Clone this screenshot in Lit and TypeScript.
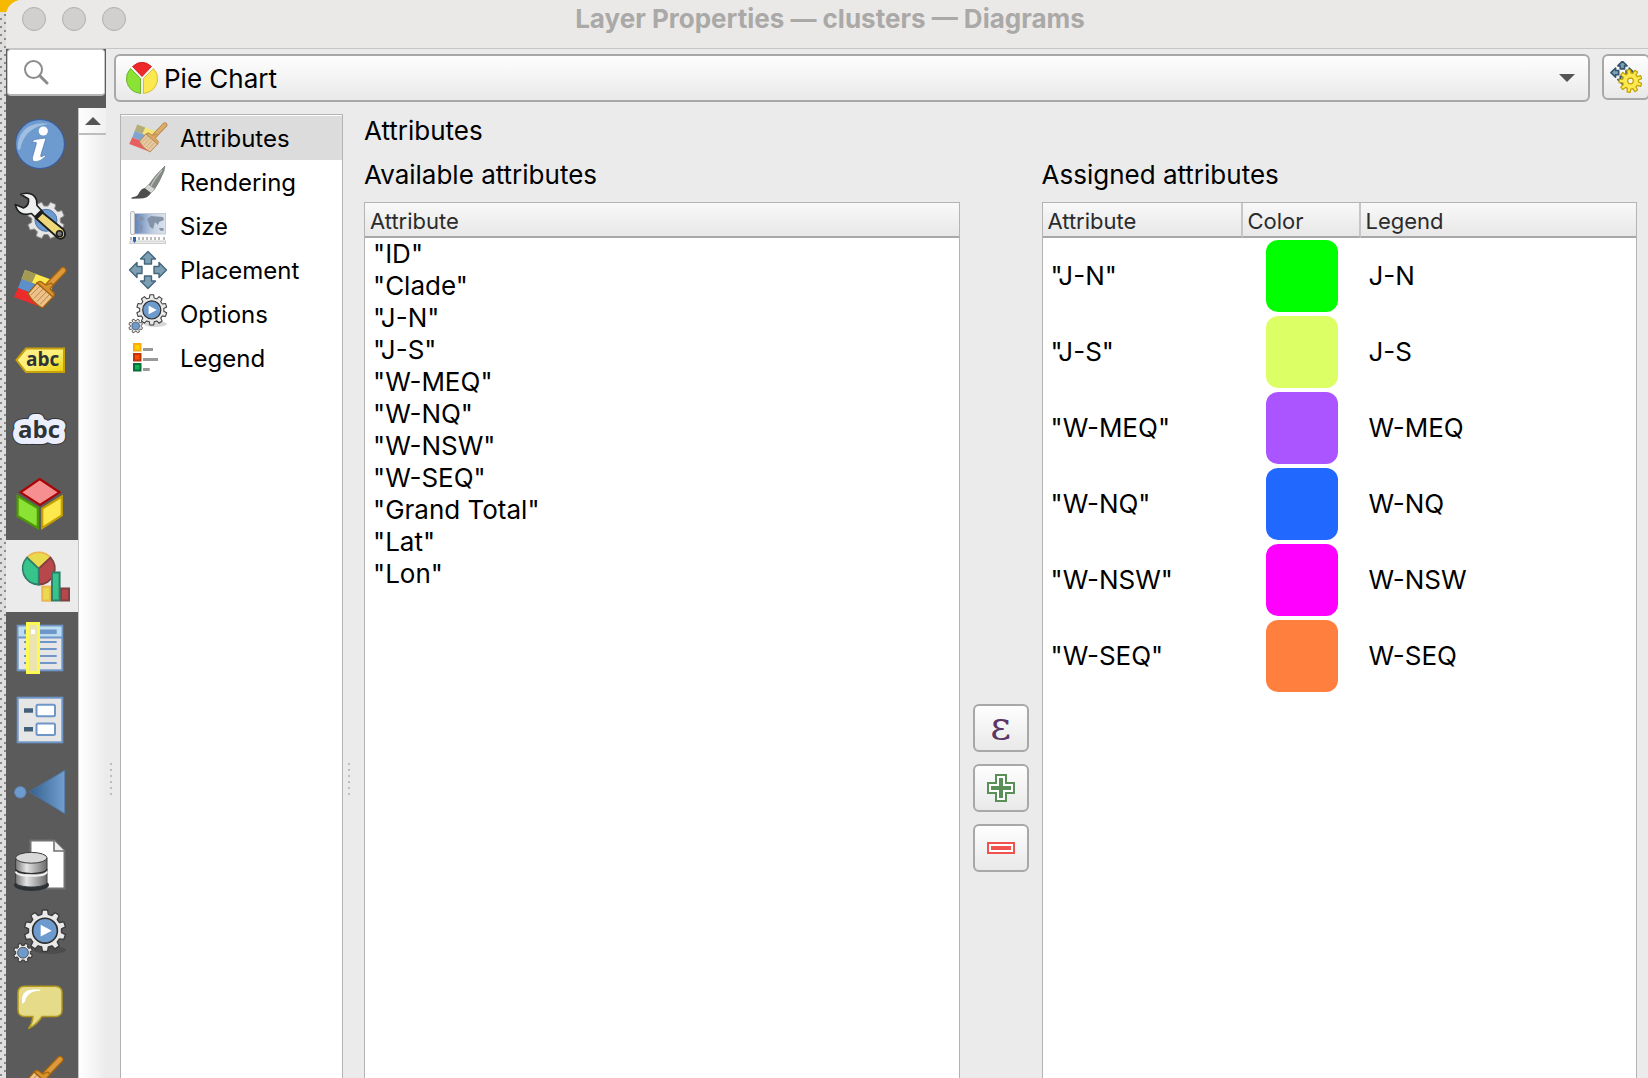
import { LitElement, html, css, svg, nothing } from "lit";
import { customElement, state } from "lit/decorators.js";
import { classMap } from "lit/directives/class-map.js";
import { styleMap } from "lit/directives/style-map.js";

/** Outline of a cog wheel with flat teeth. */
function gearPath(cx: number, cy: number, outer: number, inner: number, teeth: number): string {
  const step = (Math.PI * 2) / teeth;
  const pts: string[] = [];
  for (let i = 0; i < teeth; i++) {
    const a = i * step + step / 2;
    const corners: [number, number][] = [
      [-0.32, inner],
      [-0.2, outer],
      [0.2, outer],
      [0.32, inner],
    ];
    for (const [f, r] of corners) {
      pts.push(`${(cx + r * Math.cos(a + f * step)).toFixed(2)} ${(cy + r * Math.sin(a + f * step)).toFixed(2)}`);
    }
  }
  return `M${pts.join("L")}Z`;
}

const brushTool = svg`
  <path d="M57 18.500L43 33" stroke="#a8660d" stroke-width="7" stroke-linecap="round"/>
  <path d="M57 18.500L43 33" stroke="#dd9a3c" stroke-width="4.600" stroke-linecap="round"/>
  <path d="M31 31Q34 28 37 31L40 33L45 31L47 33L44 37L48 41Q49 44 46 46Z" fill="#d8922f" stroke="#a8660d" stroke-width="1.200"/>
  <path d="M31 31L22 41.500Q27 51 36.500 56L47 45Z" fill="#edc187" stroke="#9c600f" stroke-width="1.300"/>
  <path d="M25 43L34 34M28 46.500L37 37M31 49.500L40 40M34 52.500L43 43" stroke="#b98a4d" stroke-width="1"/>`;

const symbologyArt = svg`
  <path d="M19 18L49 29L45 38L15.500 27Z" fill="#fde94c"/>
  <path d="M19 18L30 22L26 31L15.500 27Z" fill="#a39a55"/>
  <path d="M15.500 27L45 38L41 47L12 36Z" fill="#5d8fcb"/>
  <path d="M12 36L41 47L37 56L8 45Z" fill="#ee2b2b"/>
  ${brushTool}`;

const actionsArt = svg`
  <ellipse cx="44" cy="50" rx="16" ry="4" fill="#000" opacity=".16"/>
  <path d=${gearPath(39, 30.7, 20.8, 16.6, 10)} fill="#e9e9e9" stroke="#3c3c3c" stroke-width="1.400" stroke-linejoin="round"/>
  <circle cx="39" cy="30.700" r="12.400" fill="#6e9bcd" stroke="#2d2d2d" stroke-width="1.600"/>
  <path d="M34.700 24.800V36.600L45.700 30.700Z" fill="#fff"/>
  <path d=${gearPath(17, 52.7, 9.6, 7.4, 8)} fill="#e9e9e9" stroke="#3c3c3c" stroke-width="1.100" stroke-linejoin="round"/>
  <circle cx="17" cy="52.700" r="5.400" fill="#6e9bcd" stroke="#555" stroke-width="1"/>`;

const arrowsArt = (stroke: string, width: number) =>
  [0, 90, 180, 270].map(
    (deg) => svg`<path transform="rotate(${deg} 20 22)" d="M20 3.500L27.500 11H23.500V16H16.500V11H12.500Z" fill="#7d9fb4" stroke=${stroke} stroke-width=${width} stroke-linejoin="round"/>`,
  );

const layerIcons: Record<string, unknown> = {
  Information: svg`
    <circle cx="34" cy="36" r="24.500" fill="#6d9bd0" stroke="#3a5c9e" stroke-width="1.200"/>
    <path d="M12 42C10 24 24 12 44 16C28 17 17 26 14.500 41Z" fill="#fff" opacity=".35"/>
    <circle cx="37.300" cy="23" r="4.600" fill="#fff"/>
    <path d="M26 34.500Q27 31.500 30 31.300L40 30L34.800 47Q34.300 49.600 36.200 48.600L38.500 46.800L39.400 48.400Q34 54 29.300 53.800Q25.400 53.200 26.600 48.800L30.300 36Q30.800 33.800 29 34.200Z" fill="#fff" stroke="#3f66a4" stroke-width=".600"/>`,
  Source: svg`
    <path d=${gearPath(40, 40.3, 18.6, 14.4, 8)} fill="#e6e6e6" stroke="#8d8d8d" stroke-width="1"/>
    <circle cx="40" cy="40.300" r="11" fill="#6e9bcd" stroke="#4b77ab" stroke-width="1"/>
    <path d="M14.700 14.300Q27 10.500 30.500 20L31 25.500L37 32L30 38L25.500 33.500Q12 37 9.300 24.500L17.500 28Q23.500 25.500 22.500 19Z" fill="#eef0ef" stroke="#1e1e1e" stroke-width="1.600" stroke-linejoin="round"/>
    <path d="M35.700 32L57 49Q60 53 58.500 56.500Q56 60 52 58L29.500 38Z" fill="#eed879" stroke="#1e1e1e" stroke-width="1.800" stroke-linejoin="round"/>
    <path d="M36 31.500L29.500 38" stroke="#1e1e1e" stroke-width="4"/>
    <circle cx="53.500" cy="53.700" r="3" fill="#777" stroke="#1e1e1e" stroke-width="1.600"/>`,
  Symbology: symbologyArt,
  Labels: svg`
    <defs><linearGradient id="tag" x1="0" y1="0" x2="1" y2="1"><stop offset="0" stop-color="#fff08a"/><stop offset=".5" stop-color="#fdf07a"/><stop offset="1" stop-color="#ecd000"/></linearGradient></defs>
    <path d="M10.500 36L20 24.500H58V48H20Z" fill="url(#tag)" stroke="#c8a20c" stroke-width="2"/>
    <text class="abc" x="20" y="42" font-size="19">abc</text>`,
  Masks: svg`
    <text class="abc" x="12" y="42" font-size="24" stroke="#33373c" stroke-width="14" stroke-linejoin="round">abc</text>
    <text class="abc" x="12" y="42" font-size="24" stroke="#ebeffd" stroke-width="12" stroke-linejoin="round">abc</text>
    <text class="abc" x="12" y="42" font-size="24">abc</text>`,
  "3D View": svg`
    <path d="M33.700 11L53.500 24.300L34 37L14.500 24.300Z" fill="#f68f8f" stroke="#a90505" stroke-width="2.200"/>
    <path d="M11.600 28L31.800 40V60L11.600 48Z" fill="#8ae234" stroke="#4e9a06" stroke-width="2.200"/>
    <path d="M55.800 28.500L36.200 40.500V60L55.800 47.500Z" fill="#fde94c" stroke="#c4a000" stroke-width="2.200"/>`,
  Diagrams: svg`
    <path d="M32.700 28.700L21 17.500A16 16 0 0 1 44.500 17.500Z" fill="#e9db4d" stroke="#ecb650" stroke-width="1.800"/>
    <path d="M32.700 28.700L44.500 17.500A16 16 0 0 1 32.700 44.500Z" fill="#b7474b" stroke="#7f3f43" stroke-width="1.800"/>
    <path d="M32.700 28.700L21 17.500A16 16 0 0 0 32.700 44.500Z" fill="#36c48a" stroke="#2d7f6c" stroke-width="1.800"/>
    <rect x="36.300" y="46.700" width="8" height="14" fill="#e9db4d" stroke="#ecb650" stroke-width="2"/>
    <rect x="55" y="48.500" width="8" height="12" fill="#b7474b" stroke="#7f3f43" stroke-width="2"/>
    <rect x="46" y="32.500" width="7.600" height="28" fill="#36c48a" stroke="#2d7f6c" stroke-width="2"/>`,
  Fields: svg`
    <rect x="11.700" y="13.700" width="44.600" height="44.600" fill="#e6e6e6" stroke="#6e96c8" stroke-width="2"/>
    <path d="M12.700 14.700H55.300V25H12.700Z" fill="#bcdcf0"/>
    <path d="M12 25.500H56" stroke="#6e96c8" stroke-width="2"/>
    <path d="M18 17.500H50.700V22H18Z" fill="#6e96c8"/>
    <path d="M18 30H50.700M18 37H50.700M18 44H50.700M18 51H50.700" stroke="#6e96c8" stroke-width="2"/>
    <rect x="21.500" y="11.500" width="11" height="49" fill="#ebe3b0" stroke="#fdf951" stroke-width="3"/>
    <rect x="25" y="17.500" width="4" height="4.500" fill="#fff"/>`,
  "Attributes Form": svg`
    <rect x="11.700" y="13.700" width="44.600" height="44.600" fill="#e6e6e6" stroke="#6e96c8" stroke-width="2"/>
    <path d="M18 24.300H27V28.700H18ZM18 43H27V47.400H18Z" fill="#44617c"/>
    <rect x="30.500" y="20.800" width="18.500" height="11.500" rx="1.500" fill="#fcfeff" stroke="#6e96c8" stroke-width="2"/>
    <rect x="30.500" y="39.500" width="18.500" height="11.500" rx="1.500" fill="#fcfeff" stroke="#6e96c8" stroke-width="2"/>`,
  Joins: svg`
    <defs><linearGradient id="join"><stop offset="0" stop-color="#34608f"/><stop offset="1" stop-color="#729fcf"/></linearGradient></defs>
    <circle cx="14.300" cy="36.300" r="5.800" fill="#6e9bcd" stroke="#5580b3" stroke-width=".800"/>
    <path d="M23.300 35.800L58.800 14.200V57.800Z" fill="url(#join)" stroke="#4873a6" stroke-width=".800"/>`,
  "Auxiliary Storage": svg`
    <defs><linearGradient id="disk"><stop offset="0" stop-color="#777"/><stop offset=".35" stop-color="#e4e4e4"/><stop offset="1" stop-color="#6b6b6b"/></linearGradient></defs>
    <path d="M24.500 12.500H48L58.500 23V60.500H24.500Z" fill="#fff" stroke="#727272" stroke-width="2"/>
    <path d="M48 12.500V23H58.500" fill="#eee" stroke="#727272" stroke-width="1.600"/>
    <ellipse cx="25.500" cy="57" rx="17.500" ry="6" fill="#2c3236"/>
    <path d="M9.600 30V54.500C11 60.500 40 60.500 41 54.500V30Z" fill="url(#disk)" stroke="#3c3c3c" stroke-width="1"/>
    <path d="M9.600 41C11 47 40 47 41 41" fill="none" stroke="#2f2f2f" stroke-width="1.200"/>
    <path d="M9.600 43.500C11 49.500 40 49.500 41 43.500" fill="none" stroke="#f2f2f2" stroke-width="1.600"/>
    <ellipse cx="25.300" cy="29.800" rx="15.700" ry="5.400" fill="#d9d9d9" stroke="#3c3c3c" stroke-width="1"/>`,
  Actions: actionsArt,
  Display: svg`
    <path d="M19 14.200H49Q56 14.200 56 21V38Q56 44.500 49 44.500H36Q30.500 53 22.700 56.400Q26.500 51 27 44.500H19Q12 44.500 12 38V21Q12 14.200 19 14.200Z" fill="#e5db88" stroke="#b39a1e" stroke-width="1.500" stroke-linejoin="round"/>
    <path d="M16 32V26Q17 17.500 27 17.500H34.500L34 18.800Q21 19 18.700 30Z" fill="#fff"/>`,
  Rendering: svg`<g transform="translate(-3 -3)">${brushTool}</g>`,
};

const sectionIcons: Record<string, unknown> = {
  Attributes: svg`<g opacity=".7" transform="translate(-4.500 -4.500) scale(.724)">${symbologyArt}</g>`,
  Rendering: svg`
    <path d="M37 6L36 11Q31 23 26 30L20 26Q27 15 37 6Z" fill="#858a85" stroke="#6b706b" stroke-width=".600"/>
    <path d="M34 10Q27 18 22.500 26.500" stroke="#bfc3bf" stroke-width="1.200" fill="none"/>
    <path d="M20.500 24.500L27 29L23 33L16.500 28.500Z" fill="#d4d6d4" stroke="#8d918d" stroke-width=".600"/>
    <path d="M16.500 28L23 33Q20 38.500 12 38.500L3.300 38.700Q3 37 6.500 36.700Q10 36 11.500 32Q13.500 28.500 16.500 28Z" fill="#4b4e4b"/>`,
  Size: svg`
    <defs><linearGradient id="map"><stop offset="0" stop-color="#5b7fb9"/><stop offset=".6" stop-color="#c3cfe2"/><stop offset="1" stop-color="#dde3ec"/></linearGradient></defs>
    <rect x="6" y="9.500" width="31.500" height="20.500" fill="url(#map)" stroke="#c5cad2" stroke-width="1"/>
    <path d="M8.500 14L14 12L16 15L12.500 18L9.500 17ZM11.500 19.500L15 22L13.500 27.500H12ZM19 15L23 12L35 13L36 16L31 18L30 21L27 18L25 25L22 23L20.500 19ZM31 24L35.500 24V27L32 26.500Z" fill="#8593a9"/>
    <rect x="2.500" y="7.500" width="4" height="23" rx="1.500" fill="#f2f2f2" stroke="#b9bcc0" stroke-width="1"/>
    <path d="M3 33V36M7 33V36M11 33V36M15 33V36M19 33V36M23 33V36M27 33V36M31 33V36M36 33V36" stroke="#777" stroke-width="1"/>
    <rect x="2" y="37" width="35.500" height="2.600" fill="#ececec" stroke="#c2c2c2" stroke-width=".800"/>
    <path d="M5 33H8V37L6.500 39L5 37Z" fill="#2d62a8"/>`,
  Placement: arrowsArt("#44667c", 1.4),
  Options: svg`<g transform="translate(-4.700 -4.500) scale(.73)">${actionsArt}</g>`,
  Legend: svg`
    <rect x="6" y="8" width="6.500" height="6.500" fill="#fdd400" stroke="#fba90b" stroke-width="2"/>
    <rect x="6" y="18" width="6.500" height="6.500" fill="#fb4b0a" stroke="#bd3405" stroke-width="2"/>
    <rect x="6" y="28" width="6.500" height="6.500" fill="#0eb358" stroke="#0a6e3b" stroke-width="2"/>
    <path d="M15 13.500H25M15 23.500H30M15 33.500H21.700" stroke="#999" stroke-width="3"/>`,
};

const layerPages = Object.keys(layerIcons);
const sections = Object.keys(sectionIcons);
const available = ["ID", "Clade", "J-N", "J-S", "W-MEQ", "W-NQ", "W-NSW", "W-SEQ", "Grand Total", "Lat", "Lon"];
const assigned = [
  { name: "J-N", color: "#00ff00" },
  { name: "J-S", color: "#dcff66" },
  { name: "W-MEQ", color: "#aa55ff" },
  { name: "W-NQ", color: "#2168ff" },
  { name: "W-NSW", color: "#ff00ff" },
  { name: "W-SEQ", color: "#ff7f3f" },
];

@customElement("app-root")
export class AppRoot extends LitElement {
  @state() private page = "Diagrams";
  @state() private section = "Attributes";

  static styles = css`
    :host {
      display: block;
      height: 100vh;
      overflow: hidden;
      font: 26px/32px Inter, "Liberation Sans", sans-serif;
      color: #000;
    }
    * { box-sizing: border-box; }
    button, input, select { font: inherit; color: inherit; margin: 0; padding: 0; border: 0; background: none; outline: none; }
    svg { display: block; flex: none; }
    .abc { font-family: "Open Sans", sans-serif; font-weight: 700; fill: #2e3436; }

    .desktop {
      display: flex;
      height: 100%;
      background:
        linear-gradient(#f7b800, #f7b800) 0 0 / 30px 12px no-repeat,
        conic-gradient(from 270deg at 2px 2px, #8a8a8a 90deg, transparent 0) 4px 14px / 8px 8px,
        conic-gradient(from 270deg at 2px 2px, #8a8a8a 90deg, transparent 0) 0 18px / 8px 8px,
        #dedede;
    }
    .window { flex: 1; min-width: 0; margin-left: 6px; display: flex; flex-direction: column; background: #ebebeb; border-top-left-radius: 16px; overflow: hidden; }

    .titlebar { flex: none; display: grid; grid-template-columns: 1fr auto 1fr; align-items: center; height: 49px; padding: 0 10px 10px 16px; background: #eae9e7; border-bottom: 1px solid #c6c6c6; }
    .lights { display: flex; gap: 16px; }
    .light { width: 24px; height: 24px; border-radius: 50%; background: #d1d0cf; border: 1px solid #b0afae; }
    .title { margin: 0; font-size: 26px; font-weight: 700; color: #aaa9a8; white-space: nowrap; }

    .content { flex: 1; min-height: 0; display: flex; }
    .side { flex: none; width: 100px; display: flex; flex-direction: column; background: #5b5b5b; }
    .search { flex: none; display: flex; align-items: center; height: 47px; margin: 0 1px 12px; padding-left: 15px; gap: 8px; background: #fff; border: 1px solid #c9c9c9; border-bottom: 2px solid #b5b5b5; border-radius: 4px; }
    .search input { flex: 1; min-width: 0; width: 0; font-size: 22px; }
    .side-scroll { flex: 1; min-height: 0; display: flex; }
    .pages { flex: none; width: 72px; overflow: hidden; }
    .page { display: block; width: 72px; height: 72px; }
    .page.current { background: #ebebeb; }
    .scrollbar { flex: 1; border-left: 1px solid #c4c4c4; background: linear-gradient(90deg, #fff, #ebebeb); }
    .scroll-up { display: flex; width: 100%; height: 27px; align-items: center; justify-content: center; border-bottom: 2px solid #bdbdbd; background: linear-gradient(90deg, #fdfdfd, #f0f0f0); }

    .splitter { flex: none; padding-top: 714px; display: flex; justify-content: center; }
    .splitter.outer { width: 10px; margin-right: -2px; }
    .splitter.inner { width: 21px; padding: 649px 10px 0 0; }
    .grip { width: 2px; height: 36px; background: repeating-linear-gradient(#bdbdbd 0 2px, transparent 2px 6px); }

    .main { flex: 1; min-width: 0; display: flex; flex-direction: column; }
    .toolbar { flex: none; display: flex; align-items: flex-start; gap: 12px; padding: 5px 0 12px; }
    .combo, .tool { border: 2px solid #a8a8a8; border-radius: 6px; background: linear-gradient(#fefefe, #e9e9e9); }
    .combo { flex: 1; min-width: 0; display: flex; align-items: center; height: 48px; padding: 0 13px 0 10px; gap: 6px; }
    .combo select { flex: 1; min-width: 0; height: 44px; padding-top: 2px; appearance: none; }
    .tool { display: flex; align-items: center; justify-content: center; }
    .tool.auto { flex: none; width: 48px; height: 46px; margin-right: -2px; }

    .body { flex: 1; min-height: 0; display: flex; padding-left: 6px; }
    .sections { flex: none; width: 223px; padding: 1px 0; background: #fff; border: 1px solid #b4b4b4; border-bottom: 0; }
    .section { display: flex; align-items: center; gap: 12px; width: 100%; height: 44px; padding-left: 7px; text-align: left; font-size: 24px; }
    .section span { padding-top: 2px; }
    .section.current { background: #dcdcdc; }

    .panel { flex: 1; min-width: 0; display: flex; flex-direction: column; padding: 1px 11px 0 0; gap: 12px; }
    .heading { margin: 0; font-size: 26px; line-height: 32px; font-weight: 400; }
    .lists { flex: 1; min-height: 0; display: flex; gap: 13px; }
    .group { flex: 1; min-width: 0; display: flex; flex-direction: column; gap: 11px; }
    .box { flex: 1; min-height: 0; overflow: hidden; background: #fff; border: 1px solid #b4b4b4; border-bottom: 0; }
    table { width: 100%; border-collapse: separate; border-spacing: 0; table-layout: fixed; }
    th { height: 35px; padding: 2px 5px 0; text-align: left; font-size: 22px; line-height: 28px; font-weight: 400; color: #2b2b2b; background: linear-gradient(#f8f8f8, #e8e8e8); border-bottom: 2px solid #a8a8a8; border-right: 2px solid #c6c6c6; }
    th:last-child { border-right: 0; }
    td { height: 32px; padding: 0 8px; white-space: nowrap; }
    .wide td { height: 76px; }
    .col-name { width: 200px; }
    .col-color { width: 118px; }
    .wide td.cell-color { padding: 0; }
    .swatch { display: block; width: 72px; height: 72px; margin: 0 auto; border-radius: 12px; }

    .transfer { flex: none; width: 56px; padding-top: 545px; display: flex; flex-direction: column; gap: 12px; }
    .transfer .tool { height: 48px; }
    .epsilon { padding-bottom: 6px; font: 400 40px/40px "DejaVu Serif", serif; color: #5c3566; }
  `;

  private table(label: string, content: unknown) {
    return html`<section class="group">
      <h3 class="heading">${label}</h3>
      <div class="box">${content}</div>
    </section>`;
  }

  render() {
    return html`
      <div class="desktop">
        <div class="window">
          <header class="titlebar">
            <div class="lights"><span class="light"></span><span class="light"></span><span class="light"></span></div>
            <h1 class="title">Layer Properties — clusters — Diagrams</h1>
          </header>
          <div class="content">
            <aside class="side">
              <label class="search">
                <svg width="26" height="26" viewBox="0 0 26 26" fill="none" stroke="#8c8c8c"><circle cx="10.500" cy="10.500" r="8.500" stroke-width="2"/><path d="M16.800 16.800L24 24" stroke-width="3" stroke-linecap="round"/></svg>
                <input type="text" aria-label="Search" />
              </label>
              <div class="side-scroll">
                <nav class="pages">
                  ${layerPages.map(
                    (name) => html`<button
                      class=${classMap({ page: true, current: name === this.page })}
                      aria-label=${name}
                      aria-current=${name === this.page ? "page" : nothing}
                      @click=${() => (this.page = name)}
                    ><svg width="72" height="72" viewBox="0 0 72 72" fill="none">${layerIcons[name]}</svg></button>`,
                  )}
                </nav>
                <div class="scrollbar">
                  <button class="scroll-up" aria-label="Scroll up"><svg width="16" height="8" viewBox="0 0 16 8"><path d="M0 8L8 0L16 8Z" fill="#555"/></svg></button>
                </div>
              </div>
            </aside>
            <div class="splitter outer"><div class="grip"></div></div>
            <main class="main">
              <div class="toolbar">
                <div class="combo">
                  <svg width="32" height="32" viewBox="0 0 32 32">
                    <path d="M16 14.500L6.500 4.500Q16 -4 25.500 4.500Z" fill="#ef2929" stroke="#c11" stroke-width=".800"/>
                    <path d="M4.500 6.500L14.500 16.500V31.500Q3 30 .5 19Q-.5 12 4.500 6.500Z" fill="#8ae234" stroke="#5fa51a" stroke-width=".800"/>
                    <path d="M27.500 6.500L17.500 16.500V31.500Q29 30 31.500 19Q32.500 12 27.500 6.500Z" fill="#fce94f" stroke="#cdb21a" stroke-width=".800"/>
                  </svg>
                  <select aria-label="Diagram type">
                    <option>Pie Chart</option>
                  </select>
                  <svg width="16" height="8" viewBox="0 0 16 8"><path d="M0 0H16L8 8Z" fill="#555"/></svg>
                </div>
                <button class="tool auto" aria-label="Automated placement settings">
                  <svg width="32" height="32" viewBox="0 0 32 32">
                    <g transform="translate(0 -2) scale(.62)">${arrowsArt("#33566e", 2.6)}</g>
                    <path d=${gearPath(20.5, 20, 11.5, 8, 9)} fill="#fce94f" stroke="#c4a000" stroke-width="1.200" stroke-linejoin="round"/>
                    <circle cx="20.500" cy="20" r="2.800" fill="#f4f4f4" stroke="#c4a000" stroke-width="1.200"/>
                  </svg>
                </button>
              </div>
              <div class="body">
                <nav class="sections">
                  ${sections.map(
                    (name) => html`<button
                      class=${classMap({ section: true, current: name === this.section })}
                      @click=${() => (this.section = name)}
                    ><svg width="40" height="44" viewBox="0 0 40 44" fill="none">${sectionIcons[name]}</svg><span>${name}</span></button>`,
                  )}
                </nav>
                <div class="splitter inner"><div class="grip"></div></div>
                <div class="panel">
                  <h2 class="heading">${this.section}</h2>
                  <div class="lists">
                    ${this.table(
                      "Available attributes",
                      html`<table>
                        <thead><tr><th scope="col">Attribute</th></tr></thead>
                        <tbody>${available.map((name) => html`<tr><td>"${name}"</td></tr>`)}</tbody>
                      </table>`,
                    )}
                    <div class="transfer">
                      <button class="tool" aria-label="Add expression"><span class="epsilon">ε</span></button>
                      <button class="tool" aria-label="Add selected attribute">
                        <svg width="28" height="28" viewBox="0 0 28 28" fill="#fff" stroke="#5a8f5a" stroke-width="2">
                          <path d="M9 1H19V9H27V19H19V27H9V19H1V9H9Z"/><path d="M14 4V24M4 14H24" stroke-width="4"/>
                        </svg>
                      </button>
                      <button class="tool" aria-label="Remove selected attribute">
                        <svg width="28" height="12" viewBox="0 0 28 12" fill="#fff" stroke="#ef5350" stroke-width="2">
                          <path d="M1 1H27V11H1Z"/><path d="M4 6H24" stroke-width="4"/>
                        </svg>
                      </button>
                    </div>
                    ${this.table(
                      "Assigned attributes",
                      html`<table class="wide">
                        <thead>
                          <tr><th scope="col" class="col-name">Attribute</th><th scope="col" class="col-color">Color</th><th scope="col">Legend</th></tr>
                        </thead>
                        <tbody>
                          ${assigned.map(
                            (row) => html`<tr>
                              <td>"${row.name}"</td>
                              <td class="cell-color"><button class="swatch" aria-label="Color of ${row.name}" style=${styleMap({ background: row.color })}></button></td>
                              <td>${row.name}</td>
                            </tr>`,
                          )}
                        </tbody>
                      </table>`,
                    )}
                  </div>
                </div>
              </div>
            </main>
          </div>
        </div>
      </div>
    `;
  }
}
